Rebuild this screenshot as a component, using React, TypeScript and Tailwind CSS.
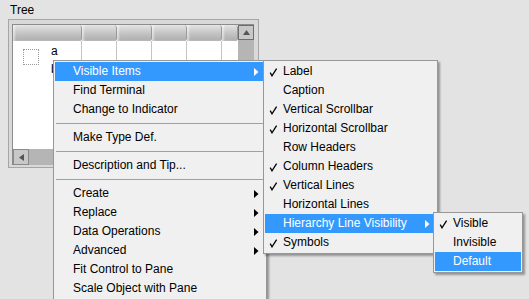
import { Fragment } from 'react'

type Item = { label?: string; sep?: boolean; sub?: boolean; checked?: boolean; active?: boolean }

const mainItems: Item[] = [
  { label: 'Visible Items', sub: true, active: true },
  { label: 'Find Terminal' },
  { label: 'Change to Indicator' },
  { sep: true },
  { label: 'Make Type Def.' },
  { sep: true },
  { label: 'Description and Tip...' },
  { sep: true },
  { label: 'Create', sub: true },
  { label: 'Replace', sub: true },
  { label: 'Data Operations', sub: true },
  { label: 'Advanced', sub: true },
  { label: 'Fit Control to Pane' },
  { label: 'Scale Object with Pane' },
]

const visibleItems: Item[] = [
  { label: 'Label', checked: true },
  { label: 'Caption' },
  { label: 'Vertical Scrollbar', checked: true },
  { label: 'Horizontal Scrollbar', checked: true },
  { label: 'Row Headers' },
  { label: 'Column Headers', checked: true },
  { label: 'Vertical Lines', checked: true },
  { label: 'Horizontal Lines' },
  { label: 'Hierarchy Line Visibility', sub: true, active: true },
  { label: 'Symbols', checked: true },
]

const lineItems: Item[] = [
  { label: 'Visible', checked: true },
  { label: 'Invisible' },
  { label: 'Default', active: true },
]

function Check({ white }: { white?: boolean }) {
  return (
    <svg width="9" height="9" viewBox="0 0 9 9" className="absolute left-[4px] top-[6px]">
      <path d="M1.2 4.6 L3 7.8 L7.6 0.6" fill="none" stroke={white ? '#fff' : '#000'} strokeWidth="1.3" />
    </svg>
  )
}

function Arrow({ white }: { white?: boolean }) {
  return (
    <svg width="5" height="8" viewBox="0 0 5 8" className="absolute right-[6px] top-[6px]">
      <path d="M0 0 L4.5 4 L0 8 Z" fill={white ? '#fff' : '#000'} />
    </svg>
  )
}

function Menu({ items, className }: { items: Item[]; className: string }) {
  return (
    <div
      className={`absolute bg-[#f0f0f0] border border-[#979797] p-[1px] shadow-[2px_2px_2px_rgba(0,0,0,0.35)] ${className}`}
    >
      {items.map((it, i) =>
        it.sep ? (
          <div key={i} className="h-[9px] flex items-center pl-[1px]">
            <div className="w-full h-px bg-[#a0a0a0]" />
          </div>
        ) : (
          <Fragment key={i}>
            <div
              className={`relative h-[19px] leading-[19px] pl-[18px] whitespace-nowrap ${
                it.active ? 'bg-[#3399ff] text-white' : 'text-black'
              }`}
            >
              {it.checked && <Check white={it.active} />}
              {it.label}
              {it.sub && <Arrow white={it.active} />}
            </div>
          </Fragment>
        )
      )}
    </div>
  )
}

function HeaderCell({ w }: { w: string }) {
  return (
    <div
      className={`${w} h-full border-r border-[#9a9a9a] rounded-r-[3px] bg-[linear-gradient(#e4e4e4,#c8c8c8_45%,#acacac)] shadow-[inset_2px_0_2px_rgba(255,255,255,0.5)]`}
    />
  )
}

export default function App() {
  return (
    <div
      className="relative w-[529px] h-[299px] overflow-hidden bg-[#e3e3e3] text-[12px] text-black"
      style={{ fontFamily: '"Liberation Sans", Arial, sans-serif' }}
    >
      <div className="pl-[10px] pt-[3px] leading-[14px]">Tree</div>

      {/* tree control */}
      <div className="ml-[8px] mt-[2px] w-[251px] h-[149px] border border-[#a6a6a6] bg-[#d9d9d9] pl-[3px] pt-[4px] pr-[4px] pb-[2px] flex flex-col">
        <div className="flex flex-1 min-h-0 border-l border-t border-[#8c8c8c]">
          <div className="flex-1 flex flex-col bg-white">
            <div className="h-[16px] flex">
              <HeaderCell w="w-[69px]" />
              <HeaderCell w="w-[35px]" />
              <HeaderCell w="w-[35px]" />
              <HeaderCell w="w-[35px]" />
              <HeaderCell w="w-[35px]" />
              <HeaderCell w="flex-1" />
            </div>
            <div className="flex-1 relative flex">
              <div className="w-[69px] border-r border-[#c4c4c4] relative">
                <div className="absolute left-[10px] top-[8px] w-[16px] h-[16px] border border-dotted border-[#9a9a9a]" />
                <div className="absolute left-[38px] top-[3px] leading-[14px]">a</div>
                <div className="absolute left-[38px] top-[21px] leading-[14px]">b</div>
              </div>
              <div className="w-[35px] border-r border-[#c4c4c4]" />
              <div className="w-[35px] border-r border-[#c4c4c4]" />
              <div className="w-[35px] border-r border-[#c4c4c4]" />
              <div className="w-[35px] border-r border-[#c4c4c4]" />
              <div className="flex-1" />
            </div>
          </div>
          <div className="w-[16px] bg-[#b5b5b5] flex flex-col">
            <div className="h-[15px] border border-[#6e6e6e] bg-[#c8c8c8] flex items-center justify-center">
              <svg width="7" height="5" viewBox="0 0 7 5">
                <path d="M0 5 L3.5 0 L7 5 Z" fill="#555" />
              </svg>
            </div>
          </div>
        </div>
        <div className="h-[16px] bg-[#b5b5b5] flex border-l border-[#8c8c8c]">
          <div className="w-[16px] border border-[#8a8a8a] bg-[#c8c8c8] flex items-center justify-center">
            <svg width="5" height="7" viewBox="0 0 5 7">
              <path d="M5 0 L0 3.5 L5 7 Z" fill="#555" />
            </svg>
          </div>
        </div>
      </div>

      <Menu items={mainItems} className="left-[53px] top-[60px] w-[214px] h-[260px]" />
      <Menu items={visibleItems} className="left-[263px] top-[60px] w-[175px]" />
      <Menu items={lineItems} className="left-[433px] top-[212px] w-[90px]" />
    </div>
  )
}
